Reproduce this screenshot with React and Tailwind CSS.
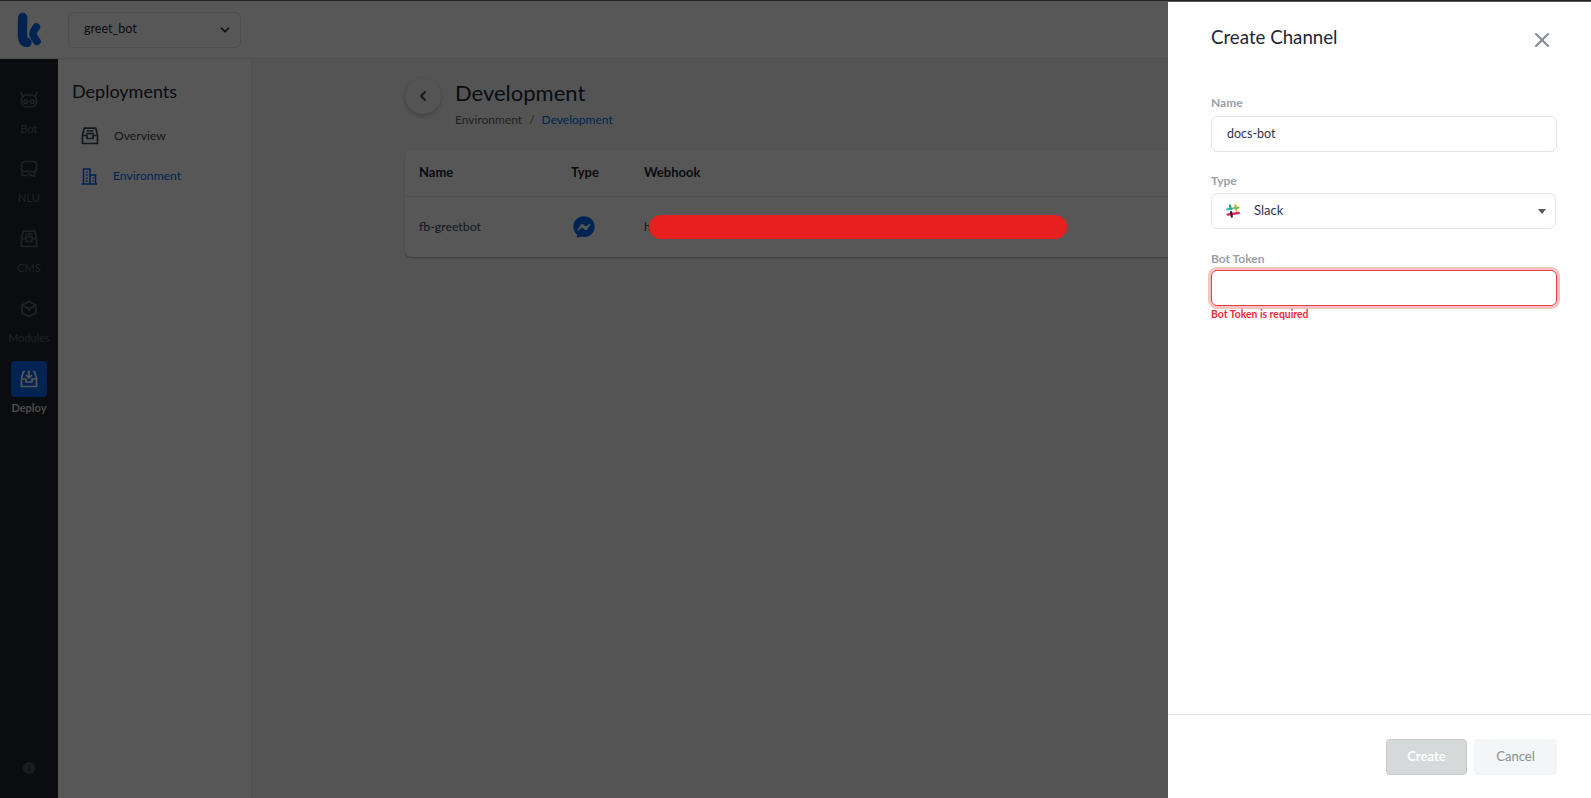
import { ChevronDown, ChevronLeft, X } from "lucide-react";
import { FaFacebookMessenger } from "react-icons/fa";

const Logo = () => (
  <svg width="24" height="35" viewBox="0 0 24 35" fill="none">
    <path d="M5.7 5.5C5.7 11 5.3 17 5.5 24C5.6 28 6.5 30 10 30.5" stroke="#0068f0" strokeWidth="9.4" strokeLinecap="round" />
    <path d="M19.4 15C17.9 17.5 16 19.2 16 21.6C16 24.4 18.4 27 20 29.4" stroke="#0068f0" strokeWidth="7.6" strokeLinecap="round" />
  </svg>
);

const BotIcon = () => (
  <svg width="18" height="18" viewBox="0 0 18 18" fill="none" stroke="currentColor" strokeWidth="1.6">
    <rect x="1.5" y="4" width="15" height="12" rx="5" />
    <path d="M2.5 5L1 1.5M15.5 5L17 1.5" strokeLinecap="round" />
    <circle cx="5.8" cy="10.5" r="1.8" />
    <circle cx="12.2" cy="10.5" r="1.8" />
  </svg>
);

const NluIcon = () => (
  <svg width="18" height="18" viewBox="0 0 18 18" fill="none" stroke="currentColor" strokeWidth="1.6" strokeLinejoin="round">
    <path d="M5 1.5H13C15 1.5 16.5 3 16.5 5V8C16.5 10 15 11.5 13 11.5H4C2.6 11.5 1.5 10.4 1.5 9V5C1.5 3 3 1.5 5 1.5Z" />
    <path d="M2 11.5V15.5H7.5M8 14L14.5 16.5V12" />
  </svg>
);

const InboxIcon = () => (
  <svg width="18" height="18" viewBox="0 0 18 18" fill="none" stroke="currentColor" strokeWidth="1.7" strokeLinejoin="round">
    <path d="M3.2 1.2H14.8L16.5 8V16.5H1.5V8L3.2 1.2Z" />
    <path d="M1.5 8.5H6V11.5H12V8.5H16.5" />
    <path d="M5.5 4H12.5M5 6.6H13" />
  </svg>
);

const ModulesIcon = () => (
  <svg width="18" height="18" viewBox="0 0 18 18" fill="none" stroke="currentColor" strokeWidth="1.8" strokeLinejoin="round">
    <path d="M9 1.5L16 5V13L9 16.5L2 13V5L9 1.5Z" />
    <path d="M2.5 5.5L9 9L15.5 5.5M9 9V11" />
  </svg>
);

const DeployIcon = () => (
  <svg width="18" height="18" viewBox="0 0 18 18" fill="none" stroke="currentColor" strokeWidth="1.7" strokeLinejoin="round">
    <path d="M5 1.5H3.5L1.5 8V16.5H16.5V8L14.5 1.5H13" />
    <path d="M1.5 9H6V12H12V9H16.5" />
    <path d="M9 1V8M6.5 5.5L9 8L11.5 5.5" strokeLinecap="round" />
  </svg>
);

const BuildingIcon = () => (
  <svg width="17" height="17" viewBox="0 0 17 17" fill="none" stroke="currentColor" strokeWidth="1.6">
    <path d="M0.5 16H16" />
    <path d="M2.5 16V1H9V16M9 7H14.5V16" />
    <path d="M4.8 4H6.8M4.8 7H6.8M4.8 10H6.8M4.8 13H6.8M11.5 10H12.8M11.5 13H12.8" />
  </svg>
);

const SlackIcon = () => (
  <svg width="14" height="14" viewBox="0 0 14 14" fill="none" strokeWidth="2.2" strokeLinecap="round">
    <path d="M1.2 5.4L6 4.6" stroke="#36c5ab" />
    <path d="M4 1.4L4.6 5" stroke="#2f9e8f" />
    <path d="M9.4 1.2L10.4 6.6" stroke="#ecb22e" />
    <path d="M8 4.2L12.4 3.6" stroke="#7dbb6c" />
    <path d="M1.6 10.6L12.8 8.8" stroke="#e01e5a" />
    <path d="M5 8L5.8 12.6" stroke="#3b1d3f" />
  </svg>
);

const railItems = [
  { label: "Bot", icon: BotIcon, top: "pt-[32px]" },
  { label: "NLU", icon: NluIcon, top: "pt-[23px]" },
  { label: "CMS", icon: InboxIcon, top: "pt-[24px]" },
  { label: "Modules", icon: ModulesIcon, top: "pt-[24px]" },
];

const Label = ({ children }) => (
  <div className="text-[12px] font-bold leading-[16px] text-[#9aa1a9]">{children}</div>
);

export default function App() {
  return (
    <div className="relative flex h-screen w-full flex-col overflow-hidden border-t border-[#222] bg-[#f7f7f7] font-['Lato','Noto_Sans',sans-serif] text-[#1b2733]">
      {/* Header */}
      <header className="flex h-[58px] shrink-0 items-center border-b border-[#e8e8e8] bg-white">
        <div className="flex w-[68px] justify-center pr-[10px]">
          <Logo />
        </div>
        <div className="flex h-[36px] w-[173px] items-center justify-between rounded-[6px] border border-[#e2e2e2] pl-[15px] pr-[8px] text-[12.5px]">
          greet_bot
          <ChevronDown size={14} strokeWidth={3} />
        </div>
      </header>

      <div className="flex min-h-0 flex-1">
        {/* Icon rail */}
        <nav className="flex w-[58px] shrink-0 flex-col items-center bg-[#20252d] text-[#5d636b]">
          {railItems.map((item) => (
            <div key={item.label} className={`flex flex-col items-center ${item.top}`}>
              <item.icon />
              <span className="mt-[12px] text-[11px] leading-[16px]">{item.label}</span>
            </div>
          ))}
          <div className="mt-[15px] flex flex-col items-center text-white">
            <div className="flex h-[36px] w-[36px] items-center justify-center rounded-[4px] bg-[#0068f0]">
              <DeployIcon />
            </div>
            <span className="mt-[3px] text-[11px] font-bold leading-[16px] text-[#d8d8d8]">Deploy</span>
          </div>
          <div className="mt-auto mb-[24px] flex h-[12px] w-[12px] items-center justify-center rounded-full bg-[#4c5157] text-[8px] font-bold text-[#20252d]">
            i
          </div>
        </nav>

        {/* Section sidebar */}
        <aside className="w-[194px] shrink-0 border-r border-[#e6e6e6] bg-white pl-[14px] pt-[20px]">
          <h2 className="text-[18px] leading-[24px]">Deployments</h2>
          <div className="mt-[24px] flex items-center gap-[15px] pl-[9px] text-[12.2px] text-[#3c4650]">
            <InboxIcon />
            Overview
          </div>
          <div className="mt-[22px] flex items-center gap-[15px] pl-[9px] text-[12.2px] text-[#0068f0]">
            <BuildingIcon />
            Environment
          </div>
        </aside>

        {/* Main */}
        <main className="min-w-0 flex-1 pl-[153px] pt-[19px]">
          <div className="flex items-start gap-[14px]">
            <button className="flex h-[36px] w-[36px] items-center justify-center rounded-full bg-[#f5f5f5] shadow-[0_2px_5px_rgba(0,0,0,0.25)]">
              <ChevronLeft size={16} strokeWidth={3} className="text-[#3c4650]" />
            </button>
            <div>
              <h1 className="text-[22px] leading-[30px]">Development</h1>
              <div className="mt-[4px] flex gap-[7px] text-[12px] leading-[16px] text-[#5c6670]">
                Environment <span>/</span> <span className="text-[#0068f0]">Development</span>
              </div>
            </div>
          </div>

          <div className="mt-[22px] w-[1100px] rounded-[6px] bg-white shadow-[0_1px_2px_rgba(0,0,0,0.3)]">
            <div className="flex h-[47px] items-center border-b border-[#e6e6e6] pl-[14px] text-[13px] font-bold">
              <div className="w-[152px]">Name</div>
              <div className="w-[73px]">Type</div>
              <div>Webhook</div>
            </div>
            <div className="flex h-[60px] items-center pl-[14px] text-[12.3px] text-[#3c4650]">
              <div className="w-[152px]">fb-greetbot</div>
              <div className="w-[73px] pl-[2px]">
                <FaFacebookMessenger size={22} className="text-[#0068f0]" />
              </div>
              <div className="relative">
                h
                <span className="absolute left-[5px] top-1/2 z-50 h-[24px] w-[418px] -translate-y-1/2 rounded-full bg-[#e81f1f]" />
              </div>
            </div>
          </div>
        </main>
      </div>

      {/* Dimmed backdrop */}
      <div className="absolute inset-0 z-40 bg-black/[0.66]" />

      {/* Create Channel drawer */}
      <section className="absolute bottom-0 right-0 top-[1px] z-[60] flex w-[423px] flex-col bg-white">
        <div className="flex items-start justify-between pl-[43px] pr-[37px] pt-[23px]">
          <h2 className="text-[18.7px] leading-[24px] text-[#1b2733]">Create Channel</h2>
          <X size={24} strokeWidth={2} className="mt-[3px] text-[#7e8a96]" />
        </div>

        <div className="flex-1 pl-[43px] pr-[34px] pt-[43px]">
          <Label>Name</Label>
          <div className="mt-[5px] flex h-[36px] items-center rounded-[6px] border border-[#e2e4e7] px-[15px] text-[12.5px] text-[#2c3550]">
            docs-bot
          </div>

          <div className="mt-[21px]">
            <Label>Type</Label>
          </div>
          <div className="mr-[1px] mt-[4px] flex h-[36px] items-center rounded-[6px] border border-[#e2e4e7] pl-[14px] pr-[9px] text-[13px] text-[#2c3550]">
            <SlackIcon />
            <span className="ml-[14px]">Slack</span>
            <span className="ml-auto h-0 w-0 border-x-[4.5px] border-t-[5px] border-x-transparent border-t-[#55595e]" />
          </div>

          <div className="mt-[22px]">
            <Label>Bot Token</Label>
          </div>
          <div className="mt-[3px] h-[36px] rounded-[6px] border border-[#e53e3e] shadow-[0_0_0_3px_rgba(229,62,62,0.32)]" />
          <div className="mt-[1px] text-[10.4px] font-bold leading-[14px] text-[#ef2b3b]">Bot Token is required</div>
        </div>

        <footer className="flex h-[84px] shrink-0 justify-end gap-[7px] border-t border-[#e6e6e6] pr-[34px] pt-[24px]">
          <button className="h-[36px] w-[81px] rounded-[4px] border border-[#c5c9ca] bg-[#d6d9da] text-[13px] font-bold text-white">
            Create
          </button>
          <button className="h-[36px] w-[83px] rounded-[4px] bg-[#f4f5f7] text-[13px] text-[#868e96]">
            Cancel
          </button>
        </footer>
      </section>
    </div>
  );
}
